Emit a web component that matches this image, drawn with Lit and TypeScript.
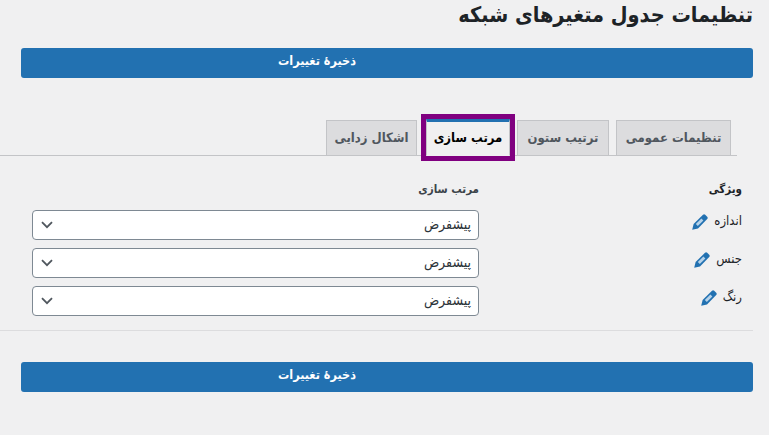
import { LitElement, html, css, svg } from "lit";
import { customElement } from "lit/decorators.js";

const pencil = svg`<svg class="pen" viewBox="0 0 16 16" width="16" height="16" aria-hidden="true"><path d="M11 .8a1.6 1.6 0 0 1 2.2 0l2 2a1.6 1.6 0 0 1 0 2.2L6 14.4.2 15.8l1.4-5.8z" fill="#2271b1"/><path d="M9.4 4.4l2 2-5.6 5.6-2-2z" fill="#b5d2ea"/></svg>`;

const chevron = svg`<svg class="chev" viewBox="0 0 12 8" width="12" height="8" aria-hidden="true"><path d="M1 1.2L6 6.2l5-5" fill="none" stroke="#50575e" stroke-width="1.8"/></svg>`;

@customElement("app-root")
export class AppRoot extends LitElement {
  static styles = css`
    :host {
      display: block;
      width: 769px;
      height: 435px;
      overflow: hidden;
      background: #f0f0f1;
      font-family: "DejaVu Sans", sans-serif;
      font-stretch: condensed;
      color: #3c434a;
    }
    .page {
      direction: rtl;
      padding: 0 16px 0 0;
      box-sizing: border-box;
      height: 435px;
    }
    h1 {
      margin: 0;
      height: 48px;
      box-sizing: border-box;
      font-size: 21.5px;
      line-height: 29px;
      font-weight: 700;
      color: #1d2327;
      white-space: nowrap;
    }
    .save {
      display: block;
      width: 732px;
      height: 30px;
      padding: 0 140px 4px 0;
      border: none;
      border-radius: 3px;
      background: #2271b1;
      color: #fff;
      font-family: inherit;
      font-stretch: condensed;
      font-size: 12.5px;
      font-weight: 700;
      line-height: 26px;
    }
    .tabs {
      display: flex;
      gap: 7px;
      margin: 42px 16px 0 0;
      width: 737px;
      height: 36px;
      box-sizing: border-box;
      padding-right: 6px;
      border-bottom: 1px solid #c3c4c7;
      align-items: flex-end;
    }
    .tab {
      box-sizing: border-box;
      height: 36px;
      margin-bottom: -1px;
      border: 1px solid #c3c4c7;
      background: #dcdcde;
      color: #50575e;
      font-size: 13px;
      font-weight: 700;
      line-height: 33px;
      text-align: center;
      white-space: nowrap;
    }
    .t1 { width: 115px; }
    .t2 { width: 92px; }
    .t3 { width: 84px; }
    .t4 { width: 91px; margin-right: 2px; }
    .active {
      height: 37px;
      background: #f0f0f1;
      color: #000;
      border-top: 3px solid #2271b1;
      border-bottom-color: #f0f0f1;
      outline: 5px solid #800080;
      line-height: 32px;
    }
    .head {
      display: flex;
      margin-top: 25px;
      height: 19px;
      font-size: 11.5px;
      font-weight: 700;
      color: #1d2327;
      line-height: 16px;
    }
    .row {
      display: flex;
      align-items: center;
      height: 30px;
      margin-bottom: 8px;
    }
    .head .label, .row .label {
      width: 274px;
      padding-right: 11px;
      box-sizing: border-box;
      flex: none;
    }
    .head .label + div { color: #3c434a; }
    .row .label {
      font-size: 13px;
      color: #1d2327;
      display: flex;
      align-items: center;
      gap: 6px;
      height: 26px;
      margin-bottom: 10px;
    }
    .pen { flex: none; margin-top: 4px; }
    .select {
      box-sizing: border-box;
      width: 447px;
      height: 30px;
      background: #fff;
      border: 1px solid #7e8993;
      border-radius: 4px;
      padding: 0 7px 2px 8px;
      display: flex;
      align-items: center;
      justify-content: space-between;
      font-size: 14px;
      color: #2c3338;
    }
    .rows { margin-top: 10px; }
    .chev { flex: none; margin-top: 2px; }
    hr {
      border: none;
      border-top: 1px solid #dcdcde;
      margin: 14px 0 0 0;
      width: 753px;
    }
    .bottom { margin-top: 31px; }
  `;

  private row(label: string) {
    return html`<div class="row">
      <div class="label"><span>${label}</span>${pencil}</div>
      <div class="select"><span>پیشفرض</span>${chevron}</div>
    </div>`;
  }

  render() {
    return html`<div class="page">
      <h1>تنظیمات جدول متغیرهای شبکه</h1>
      <button class="save">ذخیرهٔ تغییرات</button>
      <div class="tabs">
        <div class="tab t1">تنظیمات عمومی</div>
        <div class="tab t2">ترتیب ستون</div>
        <div class="tab t3 active">مرتب سازی</div>
        <div class="tab t4">اشکال زدایی</div>
      </div>
      <div class="head"><div class="label">ویژگی</div><div>مرتب سازی</div></div>
      <div class="rows">
        ${this.row("اندازه")}
        ${this.row("جنس")}
        ${this.row("رنگ")}
      </div>
      <hr />
      <button class="save bottom">ذخیرهٔ تغییرات</button>
    </div>`;
  }
}
